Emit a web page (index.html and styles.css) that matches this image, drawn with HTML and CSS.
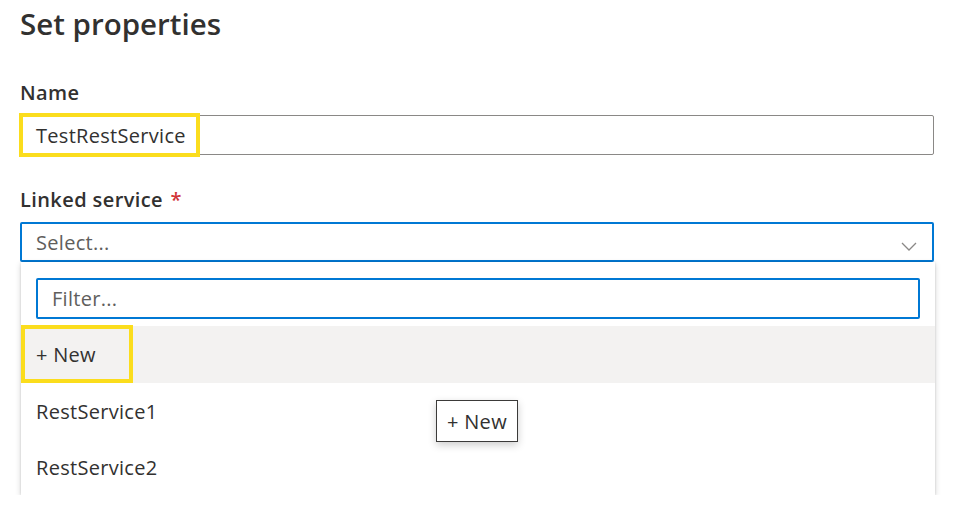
FILE: index.html
```html
<!DOCTYPE html>
<html>
<head>
<meta charset="utf-8">
<link rel="stylesheet" href="styles.css">
</head>
<body>
<div class="page">
  <h1 class="title">Set properties</h1>
  <div class="field">
    <div class="label">Name</div>
    <div class="input">
      <span class="value">TestRestService</span>
      <span class="mark mark-name"></span>
    </div>
  </div>
  <div class="field field-ls">
    <div class="label">Linked service <span class="req">*</span></div>
    <div class="select">
      <span class="placeholder">Select...</span>
      <svg class="chev" width="16" height="9" viewBox="0 0 16 9"><path d="M1 1 L8 8 L15 1" fill="none" stroke="#8a8886" stroke-width="1.3"/></svg>
    </div>
    <div class="panel">
      <div class="filter-wrap">
        <div class="filter"><span class="placeholder">Filter...</span></div>
      </div>
      <div class="option option-new">+ New<span class="mark mark-new"></span></div>
      <div class="option">RestService1</div>
      <div class="option">RestService2</div>
      <div class="tooltip">+ New</div>
    </div>
  </div>
</div>
</body>
</html>
```

FILE: styles.css
```css
html, body {
  margin: 0;
  padding: 0;
  background: #ffffff;
}
body {
  font-family: "Open Sans", "Noto Sans", sans-serif;
  color: #323130;
}
.page {
  width: 914px;
  padding: 0 0 0 20px;
}
.title {
  margin: 0;
  padding-top: 6px;
  font-size: 29.5px;
  line-height: 36px;
  font-weight: 600;
}
.field {
  margin-top: 38px;
}
.field-ls {
  margin-top: 32px;
}
.label {
  font-size: 20px;
  font-weight: 600;
  line-height: 26px;
  margin-bottom: 9px;
  letter-spacing: 0.4px;
}
.req {
  color: #d13438;
  font-weight: 600;
  margin-left: 2px;
}
.input {
  position: relative;
  height: 38px;
  border: 1px solid #8a8886;
  border-radius: 2px;
  display: flex;
  align-items: center;
  padding-left: 15px;
  font-size: 20px;
  letter-spacing: 0.3px;
}
.mark {
  position: absolute;
  border: 4px solid #fbdd1d;
  box-sizing: border-box;
  pointer-events: none;
}
.mark-name {
  left: -2px;
  top: -3px;
  width: 181px;
  height: 44px;
}
.select {
  height: 36px;
  border: 2px solid #0078d4;
  border-radius: 2px;
  display: flex;
  align-items: center;
  justify-content: space-between;
  padding: 0 15px 0 14px;
  font-size: 20px;
  letter-spacing: 0.3px;
}
.placeholder {
  color: #605e5c;
}
.chev {
  margin-top: 8px;
}
.panel {
  position: relative;
  margin-left: 1px;
  background: #ffffff;
  box-shadow: 0 2px 6px rgba(0, 0, 0, 0.18), 0 0 2px rgba(0, 0, 0, 0.12);
  padding-top: 16px;
  width: 914px;
}
.filter-wrap {
  padding: 0 15px 0 15px;
}
.filter {
  height: 37px;
  border: 2px solid #0078d4;
  border-radius: 2px;
  display: flex;
  align-items: center;
  padding-left: 14px;
  font-size: 20px;
  letter-spacing: 0.3px;
}
.option {
  position: relative;
  height: 56px;
  display: flex;
  align-items: center;
  padding-left: 15px;
  font-size: 20px;
  letter-spacing: 0.3px;
}
.option-new {
  margin-top: 7px;
  height: 57px;
  background: #f3f2f1;
}
.mark-new {
  left: 0;
  top: -1px;
  width: 112px;
  height: 58px;
}
.tooltip {
  position: absolute;
  left: 415px;
  top: 138px;
  width: 80px;
  height: 40px;
  border: 1px solid #3b3a39;
  background: #ffffff;
  box-shadow: 0 3px 8px rgba(0, 0, 0, 0.2);
  display: flex;
  align-items: center;
  justify-content: center;
  font-size: 20px;
  letter-spacing: 0.3px;
}
```
